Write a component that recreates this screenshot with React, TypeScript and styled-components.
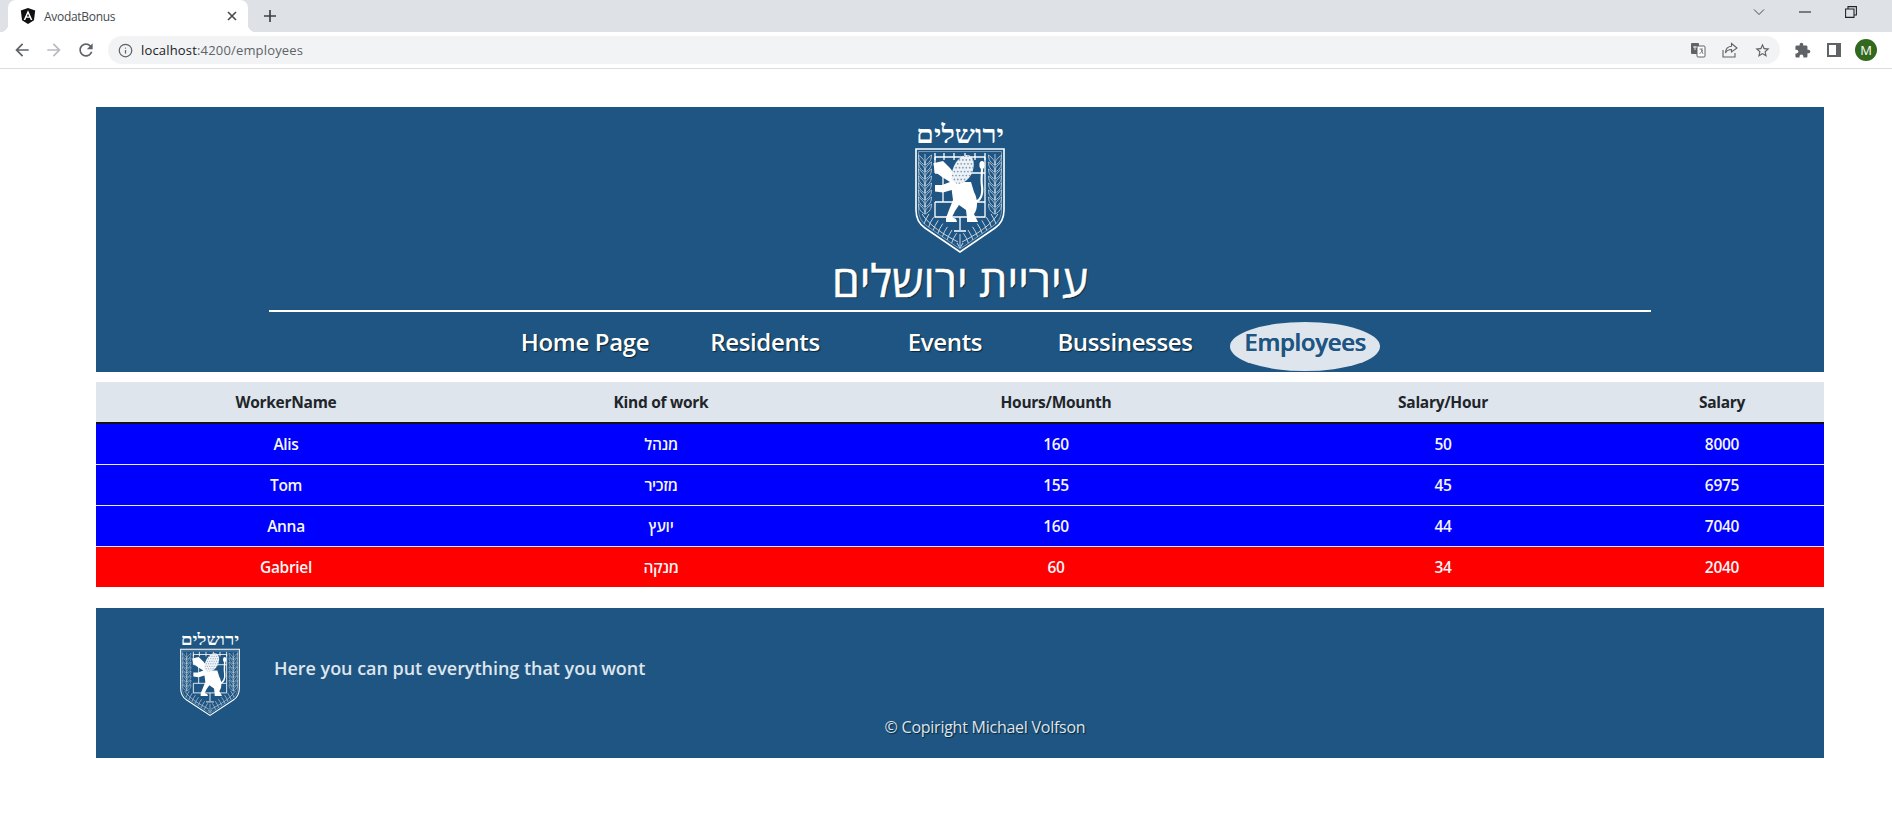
import React, { useId } from "react";
import styled, { createGlobalStyle } from "styled-components";
import { Info } from "lucide-react";

const Global = createGlobalStyle`
  html, body { margin: 0; padding: 0; background: #fff; }
  body { font-family: "Open Sans", "Noto Sans", "Liberation Sans", sans-serif; overflow: hidden; }
`;

const BLUE = "#1e5582";
const PALE = "#dee5ed";

const TabStrip = styled.div`
  height: 32px;
  background: #dee1e6;
  display: flex;
  align-items: stretch;
  padding-left: 8px;
`;
const Tab = styled.div`
  position: relative;
  width: 240px;
  background: #fff;
  border-radius: 8px 8px 0 0;
  display: flex;
  align-items: center;
  padding: 0 8px 0 12px;
  box-sizing: border-box;
  &::before, &::after {
    content: "";
    position: absolute;
    bottom: 0;
    width: 8px;
    height: 8px;
  }
  &::before { left: -8px; background: radial-gradient(circle at 0 0, #dee1e6 8px, #fff 8.5px); }
  &::after { right: -8px; background: radial-gradient(circle at 100% 0, #dee1e6 8px, #fff 8.5px); }
`;
const TabTitle = styled.span`
  flex: 1;
  margin-left: 8px;
  font-size: 12px;
  color: #45494d;
  letter-spacing: -0.3px;
`;
const NewTab = styled.div`
  width: 28px;
  margin-left: 8px;
  display: flex;
  align-items: center;
  justify-content: center;
`;
const WindowControls = styled.div`
  margin-left: auto;
  display: flex;
  align-items: center;
  padding: 0 18px 8px 0;
`;
const WinBtn = styled.div`
  width: 46px;
  display: flex;
  justify-content: center;
`;
const Toolbar = styled.div`
  box-sizing: border-box;
  background: #fff;
  border-bottom: 1px solid #dadce0;
  height: 37px;
  display: flex;
  align-items: flex-start;
  padding: 4px 10px 0 6px;
`;
const ToolBtn = styled.div`
  width: 32px;
  height: 28px;
  flex: none;
  display: flex;
  align-items: center;
  justify-content: center;
`;
const Omnibox = styled.div`
  flex: 1;
  height: 28px;
  margin: 0 6px;
  background: #f1f3f4;
  border-radius: 14px;
  display: flex;
  align-items: center;
  padding: 0 2px 0 10px;
`;
const Url = styled.div`
  flex: 1;
  margin-left: 8px;
  font-size: 13px;
  letter-spacing: 0.17px;
  color: #5f6368;
  b { font-weight: 400; color: #202124; }
`;
const Avatar = styled.div`
  width: 22px;
  height: 22px;
  border-radius: 50%;
  background: #33691e;
  color: #fff;
  font-size: 13px;
  line-height: 22px;
  text-align: center;
`;

const Page = styled.main`
  padding: 38px 68px 0 96px;
`;
const Header = styled.header`
  background: ${BLUE};
  height: 265px;
  display: flex;
  flex-direction: column;
  align-items: center;
  padding-top: 15px;
  box-sizing: border-box;
`;
const Title = styled.h1`
  margin: 0;
  height: 57px;
  line-height: 53px;
  font-size: 44.5px;
  font-weight: 500;
  color: #fff;
  -webkit-text-stroke: 0.5px #fff;
  text-shadow: 1px 1px 1px #0b2538;
  direction: rtl;
`;
const Rule = styled.hr`
  width: 1382px;
  height: 2px;
  margin: 0;
  border: 0;
  background: #fff;
  flex: none;
`;
const Nav = styled.nav`
  margin: 10px 30px 0 0;
  display: flex;
  gap: 30px;
`;
const NavItem = styled.a<{ $active?: boolean }>`
  width: 150px;
  height: 49px;
  box-sizing: border-box;
  padding-bottom: 10px;
  border-radius: 50%;
  display: flex;
  align-items: center;
  justify-content: center;
  font-size: 24px;
  font-weight: 600;
  letter-spacing: -0.35px;
  white-space: nowrap;
  color: ${(p) => (p.$active ? BLUE : "#fff")};
  background: ${(p) => (p.$active ? PALE : "transparent")};
  text-shadow: ${(p) => (p.$active ? `0.4px 0 0 ${BLUE}` : "1px 1px 1px #0b2538")};
`;

const Table = styled.table`
  margin-top: 10px;
  width: 1728px;
  table-layout: fixed;
  border-collapse: separate;
  border-spacing: 0;
  font-size: 15.5px;
  font-weight: 600;
  text-align: center;
`;
const HeadCell = styled.th`
  height: 40px;
  padding: 0;
  background: ${PALE};
  color: #212529;
  font-weight: 700;
  letter-spacing: -0.28px;
  border-bottom: 2px solid #111;
`;
const Row = styled.tr``;
const Cell = styled.td<{ $bg: string; $last?: boolean }>`
  height: 40px;
  padding: 0;
  background: ${(p) => p.$bg};
  color: #f4f6f8;
  letter-spacing: -0.3px;
  border-bottom: ${(p) => (p.$last ? "0" : "1px solid #e8edf3")};
`;

const Footer = styled.footer`
  margin-top: 21px;
  height: 150px;
  background: ${BLUE};
  box-sizing: border-box;
  padding: 24px 0 0 84px;
`;
const FooterRow = styled.div`
  display: flex;
  align-items: flex-start;
  gap: 34px;
`;
const FooterText = styled.div`
  margin-top: 22px;
  font-size: 18px;
  font-weight: 600;
  letter-spacing: -0.03px;
  color: ${PALE};
  line-height: 28px;
`;
const Copyright = styled.div`
  margin: 0 0 0 -84px;
  padding-left: 50px;
  text-align: center;
  font-size: 16px;
  letter-spacing: -0.25px;
  color: ${PALE};
  text-shadow: 1px 1px 1px #0b2538;
  line-height: 22px;
`;

const range = (n: number) => Array.from({ length: n }, (_, i) => i);

function Wheat({ x }: { x: number }) {
  return (
    <g stroke="#b9cbdb" strokeWidth="0.9" fill="none">
      <path d={`M${x} 32V90`} />
      {range(8).map((i) => {
        const y = 36 + i * 7;
        return (
          <path
            key={i}
            d={`M${x} ${y + 7}C${x - 5} ${y + 5} ${x - 6.5} ${y + 1} ${x - 6.5} ${y - 3}C${x - 3} ${y} ${x} ${y + 2} ${x} ${y + 7}C${x + 5} ${y + 5} ${x + 6.5} ${y + 1} ${x + 6.5} ${y - 3}C${x + 3} ${y} ${x} ${y + 2} ${x} ${y + 7}`}
          />
        );
      })}
    </g>
  );
}

function Olive() {
  return (
    <g stroke="#c4d3e1" strokeWidth="1" fill="none">
      <path d="M7 92C15 104 28 112 43 120" />
      {range(7).map((i) => {
        const x = 11 + i * 4.6;
        const y = 97 + i * 3.2;
        return (
          <g key={i}>
            <path d={`M${x} ${y}l3 -5`} />
            <path d={`M${x} ${y}l-2 5`} />
          </g>
        );
      })}
    </g>
  );
}

function Crest({ width, height }: { width: number; height: number }) {
  const clip = useId();
  return (
    <svg width={width} height={height} viewBox="0 0 90 131" preserveAspectRatio="none" style={{ flex: "none", display: "block" }}>
      <text
        x="45"
        y="21"
        textAnchor="middle"
        direction="rtl"
        fontFamily="'Liberation Serif', 'DejaVu Serif', serif"
        fontSize="25"
        fontWeight="700"
        fill="#fff"
        textLength="88"
        lengthAdjust="spacingAndGlyphs"
      >
        ירושלים
      </text>
      <path d="M1 27H89V88Q89 100 80 106L45 130L10 106Q1 100 1 88Z" fill="none" stroke="#fff" strokeWidth="1.6" />
      <path d="M3.5 29.5H86.5V88Q86.5 98 78 104L45 127L12 104Q3.5 98 3.5 88Z" fill="none" stroke="#9fb7cb" strokeWidth="0.7" />
      <Wheat x={10} />
      <Wheat x={80} />
      <Olive />
      <g transform="translate(90 0) scale(-1 1)">
        <Olive />
      </g>
      <path d="M45 112V124M42 121L45 126L48 121" stroke="#c4d3e1" fill="none" />
      <g stroke="#fff" strokeWidth="1.3" fill="none">
        <path d="M20 35H70M20 31V38M29 31V38M39 31V38M50 31V38M60 31V38M70 31V38" />
        <path d="M20 51H30M56 51H70M70 35V80M20 35V51M28 51V80" />
        <path d="M20 80H70M20 80V95H70V80M45 95V108M39 109H51" />
      </g>
      <path
        d="M18.3 41.3L28 39L35 46L38 50L41 60L56 60L59 70C63 77 63 87 59 92L61 96L63 100L52 100L52 96L51 88L44 83L40 89L37 95L41 97L42 100L31 100L31 96L34 88L38 78L36.7 68L28 70.5L20 69.5L20 63L27 63L35 60L27 55L20 49.7Z"
        fill="#fff"
      />
      <path d="M58 80C66 80 68 72 67 64C66 58 67 52 67 46" stroke="#fff" strokeWidth="2.2" fill="none" />
      <ellipse cx="67" cy="43" rx="2.6" ry="4" fill="#fff" />
      <clipPath id={clip}>
        <path d="M37 58C35 48 42 34 52 33C58 33 60 40 58 48C56 56 49 62 42 62Z" />
      </clipPath>
      <path d="M37 58C35 48 42 34 52 33C58 33 60 40 58 48C56 56 49 62 42 62Z" fill="#eef2f6" />
      <g clipPath={`url(#${clip})`}>
        {range(8).map((r) =>
          range(7).map((c) => (
            <circle key={`${r}-${c}`} cx={36 + c * 3.4 + (r % 2) * 1.7} cy={34 + r * 3.9} r="0.85" fill="#7c9ab5" />
          ))
        )}
      </g>
    </svg>
  );
}

const Svg = ({ size = 16, vb = 24, children }: { size?: number; vb?: number; children: React.ReactNode }) => (
  <svg width={size} height={size} viewBox={`0 0 ${vb} ${vb}`}>{children}</svg>
);

const rows = [
  ["Alis", "מנהל", "160", "50", "8000", "#0000ff"],
  ["Tom", "מזכיר", "155", "45", "6975", "#0000ff"],
  ["Anna", "יועץ", "160", "44", "7040", "#0000ff"],
  ["Gabriel", "מנקה", "60", "34", "2040", "#ff0000"],
];
const cols = [380, 370, 420, 354, 204];
const heads = ["WorkerName", "Kind of work", "Hours/Mounth", "Salary/Hour", "Salary"];
const navItems = ["Home Page", "Residents", "Events", "Bussinesses", "Employees"];

export default function App() {
  return (
    <>
      <Global />
      <TabStrip>
        <Tab>
          <Svg size={16} vb={16}>
            <path d="M8 0L15.2 2.6L14 12.2L8 16L2 12.2L.8 2.6Z" fill="#111" />
            <path d="M8 2.2L3.6 12H5.3L6.2 9.8H9.8L10.7 12H12.4ZM8 5.8L9.2 8.4H6.8Z" fill="#fff" />
          </Svg>
          <TabTitle>AvodatBonus</TabTitle>
          <Svg size={16}>
            <path d="M6 6L18 18M18 6L6 18" stroke="#45494d" strokeWidth="2.4" />
          </Svg>
        </Tab>
        <NewTab>
          <Svg size={18}>
            <path d="M12 4V20M4 12H20" stroke="#3c4043" strokeWidth="2.2" />
          </Svg>
        </NewTab>
        <WindowControls>
          <WinBtn>
            <Svg size={12}>
              <path d="M2 7L12 17L22 7" stroke="#222" strokeWidth="1.6" fill="none" />
            </Svg>
          </WinBtn>
          <WinBtn>
            <Svg size={12} vb={10}>
              <path d="M0 5H10" stroke="#222" strokeWidth="0.9" />
            </Svg>
          </WinBtn>
          <WinBtn>
            <Svg size={12} vb={10}>
              <path d="M.5 2.5H7.5V9.5H.5ZM2.5 2.5V.5H9.5V7.5H7.5" stroke="#222" strokeWidth="0.9" fill="none" />
            </Svg>
          </WinBtn>
        </WindowControls>
      </TabStrip>
      <Toolbar>
        <ToolBtn>
          <Svg size={20}><path d="M20 11H7.83l5.59-5.59L12 4l-8 8 8 8 1.41-1.41L7.83 13H20v-2z" fill="#5f6368" /></Svg>
        </ToolBtn>
        <ToolBtn>
          <Svg size={20}><path d="M4 11h12.17l-5.59-5.59L12 4l8 8-8 8-1.41-1.41L16.17 13H4v-2z" fill="#b9bbbe" /></Svg>
        </ToolBtn>
        <ToolBtn>
          <Svg size={20}><path d="M17.65 6.35C16.2 4.9 14.21 4 12 4c-4.42 0-7.99 3.58-7.99 8s3.57 8 7.99 8c3.73 0 6.84-2.55 7.73-6h-2.08c-.82 2.33-3.04 4-5.65 4-3.31 0-6-2.69-6-6s2.69-6 6-6c1.66 0 3.14.69 4.22 1.78L13 11h7V4l-2.35 2.35z" fill="#5f6368" /></Svg>
        </ToolBtn>
        <Omnibox>
          <Info size={15} color="#5f6368" strokeWidth={2} />
          <Url><b>localhost</b>:4200/employees</Url>
          <ToolBtn>
            <Svg size={16} vb={16}>
              <rect x="1" y="1" width="8" height="11" rx="1" fill="#5f6368" />
              <rect x="7" y="4" width="8" height="11" rx="1" fill="#fff" stroke="#5f6368" />
              <path d="M3 5H7M5 4V8" stroke="#fff" strokeWidth="0.8" fill="none" />
              <path d="M9.5 7H13M11 7L13 12M13 8L9.5 12" stroke="#5f6368" strokeWidth="0.8" fill="none" />
            </Svg>
          </ToolBtn>
          <ToolBtn>
            <Svg size={16} vb={16}>
              <path d="M1 8V15H13V11" stroke="#5f6368" fill="none" strokeWidth="1.1" />
              <path d="M9.5 1.5L15 6L9.5 10V7.5C6.5 7.5 4.5 8.5 3.5 11C3.5 7 6 4.5 9.5 4.2Z" stroke="#5f6368" fill="none" strokeWidth="1.1" />
            </Svg>
          </ToolBtn>
          <ToolBtn>
            <Svg size={17}><path d="M22 9.24l-7.19-.62L12 2 9.19 8.63 2 9.24l5.46 4.73L5.82 21 12 17.27 18.18 21l-1.63-7.03L22 9.24zM12 15.4l-3.76 2.27 1-4.28-3.32-2.88 4.38-.38L12 6.1l1.71 4.04 4.38.38-3.32 2.88 1 4.28L12 15.4z" fill="#5f6368" /></Svg>
          </ToolBtn>
        </Omnibox>
        <ToolBtn>
          <Svg size={17}><path d="M20.5 11H19V7c0-1.1-.9-2-2-2h-4V3.5C13 2.12 11.88 1 10.5 1S8 2.12 8 3.5V5H4c-1.1 0-1.99.9-1.99 2v3.8H3.5c1.49 0 2.7 1.21 2.7 2.7s-1.21 2.7-2.7 2.7H2V20c0 1.1.9 2 2 2h3.8v-1.5c0-1.49 1.21-2.7 2.7-2.7 1.49 0 2.7 1.21 2.7 2.7V22H17c1.1 0 2-.9 2-2v-4h1.5c1.38 0 2.5-1.12 2.5-2.5S21.88 11 20.5 11z" fill="#5f6368" /></Svg>
        </ToolBtn>
        <ToolBtn>
          <Svg size={14} vb={14}>
            <rect x="0" y="0" width="14" height="14" fill="#5f6368" />
            <rect x="2" y="2" width="7" height="10" fill="#fff" />
          </Svg>
        </ToolBtn>
        <ToolBtn>
          <Avatar>M</Avatar>
        </ToolBtn>
      </Toolbar>
      <Page>
        <Header>
          <Crest width={90} height={131} />
          <Title>עיריית ירושלים</Title>
          <Rule />
          <Nav>
            {navItems.map((n) => (
              <NavItem key={n} $active={n === "Employees"}>{n}</NavItem>
            ))}
          </Nav>
        </Header>
        <Table>
          <colgroup>
            {cols.map((c) => (
              <col key={c} width={c} />
            ))}
          </colgroup>
          <thead>
            <tr>
              {heads.map((h) => (
                <HeadCell key={h}>{h}</HeadCell>
              ))}
            </tr>
          </thead>
          <tbody>
            {rows.map((r, i) => (
              <Row key={r[0]}>
                {r.slice(0, 5).map((c, j) => (
                  <Cell key={j} $bg={r[5]} $last={i === rows.length - 1}>{c}</Cell>
                ))}
              </Row>
            ))}
          </tbody>
        </Table>
        <Footer>
          <FooterRow>
            <Crest width={60} height={84} />
            <FooterText>Here you can put everything that you wont</FooterText>
          </FooterRow>
          <Copyright>© Copiright Michael Volfson</Copyright>
        </Footer>
      </Page>
    </>
  );
}
